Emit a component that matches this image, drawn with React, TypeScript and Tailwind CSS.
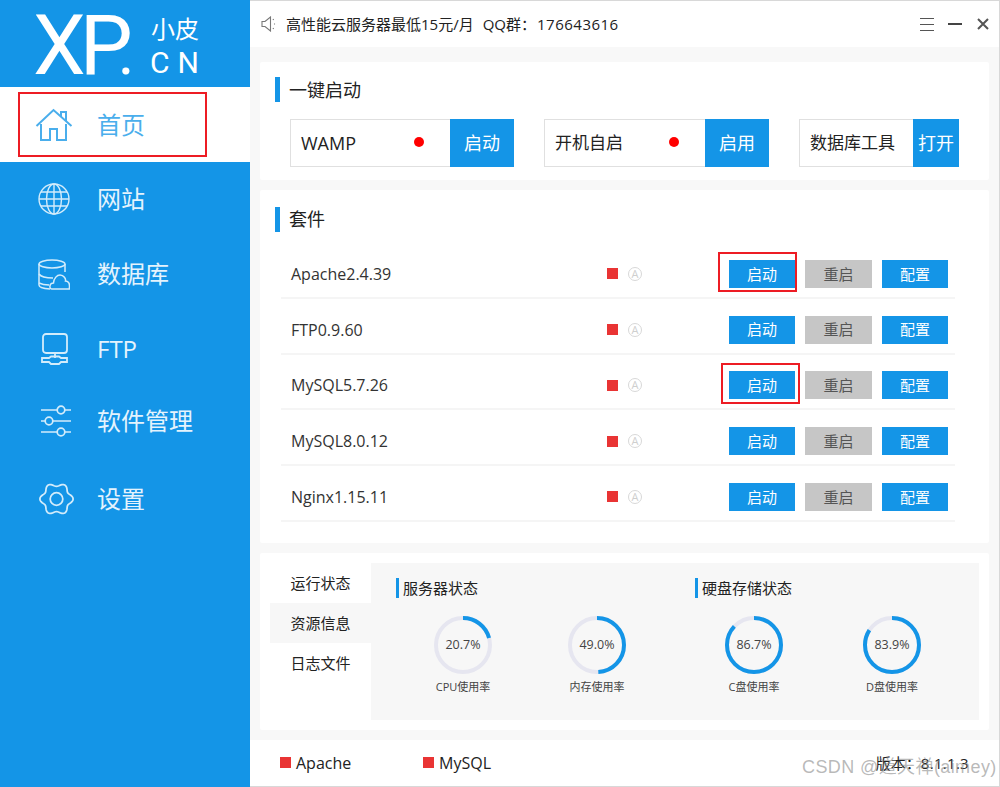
import React from "react";

const BLUE = "#1495e7";

function HomeIcon() {
  return (
    <svg width="38" height="34" viewBox="0 0 38 34" fill="none" stroke="#4aaeec" strokeWidth="2">
      <path d="M1.5 18 L18.5 2 L36.5 18" />
      <path d="M26 9 V4 H31 V13" />
      <path d="M6 16 V32 H15 V21 H22 V32 H31 V16" />
    </svg>
  );
}

function GlobeIcon() {
  return (
    <svg width="32" height="32" viewBox="0 0 32 32" fill="none" stroke="#d3ecfb" strokeWidth="1.4">
      <circle cx="16" cy="16" r="15" />
      <ellipse cx="16" cy="16" rx="7.5" ry="15" />
      <path d="M16 1 V31 M1 16 H31 M3 9 H29 M3 23 H29" />
    </svg>
  );
}

function DatabaseIcon() {
  return (
    <svg width="32" height="31" viewBox="0 0 32 31" fill="none" stroke="#d3ecfb" strokeWidth="1.5">
      <ellipse cx="14" cy="5" rx="13" ry="4" />
      <path d="M1 5 V26 C1 28 4 29.5 12 30 M27 5 V13" />
      <path d="M1 15 C3 18 9 19 15 19 M1 24 C3 25 7 26 11 26" />
      <path d="M14 30 C11 30 11 24 15.5 24 C16 19 19 16 22 16 C26 16 28 20 27.5 22 C31 22 32 25 31.3 30 Z" fill={BLUE} />
    </svg>
  );
}

function FtpIcon() {
  return (
    <svg width="27" height="32" viewBox="0 0 27 32" fill="none" stroke="#d3ecfb" strokeWidth="1.8">
      <rect x="2" y="1" width="24" height="19" rx="3" />
      <path d="M14 20 V25" />
      <path d="M1 25 H8 L10 23.5 H18 L20 25 H26 V29 H20 L18 31 H10 L8 29 H1 Z" />
    </svg>
  );
}

function SlidersIcon() {
  return (
    <svg className="ml-[2px]" width="31" height="32" viewBox="0 0 31 32" fill="none" stroke="#d3ecfb" strokeWidth="1.7">
      <path d="M1 5 H17 M25 5 H31 M1 16 H5 M13 16 H31 M1 27 H17 M25 27 H31" />
      <circle cx="21" cy="5" r="3.8" />
      <circle cx="9" cy="16" r="3.8" />
      <circle cx="21" cy="27" r="3.8" />
    </svg>
  );
}

// six rounded lobes, same outline as the app's settings glyph
function gearPath() {
  const pts: string[] = [];
  for (let i = 0; i < 72; i++) {
    const t = (i / 72) * Math.PI * 2;
    const r = 15.2 + 1.9 * Math.cos(6 * t);
    pts.push(`${(18 + r * Math.cos(t)).toFixed(2)} ${(17 + r * Math.sin(t) * 0.97).toFixed(2)}`);
  }
  return `M${pts.join(" L")} Z`;
}

function GearIcon() {
  return (
    <svg className="ml-[5px]" width="36" height="34" viewBox="0 0 36 34" fill="none" stroke="#d3ecfb" strokeWidth="1.8">
      <path d={gearPath()} />
      <circle cx="18" cy="17" r="6.5" />
    </svg>
  );
}

function SpeakerIcon() {
  return (
    <svg width="16" height="16" viewBox="0 0 16 16" fill="none" stroke="#777" strokeWidth="1.1">
      <path d="M1 5.5 H4 L9.5 1 V15 L4 10.5 H1 Z" />
      <path d="M12 3 L12.6 4 M13.5 7.5 V8.5 M12 13 L12.6 12" />
    </svg>
  );
}

function Ring({ pct, label }: { pct: number; label: string }) {
  const r = 27;
  const len = 2 * Math.PI * r;
  return (
    <div className="w-[100px] flex flex-col items-center">
      <div className="relative w-[58px] h-[58px]">
        <svg width="58" height="58" viewBox="0 0 58 58" fill="none" strokeWidth="4">
          <circle cx="29" cy="29" r={r} stroke="#e6e6f0" />
          <circle
            cx="29"
            cy="29"
            r={r}
            stroke={BLUE}
            strokeDasharray={`${(len * pct) / 100} ${len}`}
            transform="rotate(-90 29 29)"
          />
        </svg>
        <div className="absolute inset-0 flex items-center justify-center text-[12.5px] text-[#444]">{pct.toFixed(1)}%</div>
      </div>
      <div className="mt-[5px] text-[11px] leading-[16px] text-[#444]">{label}</div>
    </div>
  );
}

function SectionTitle({ text, low }: { text: string; low?: boolean }) {
  return (
    <div className="flex items-center h-[25px] pl-[15px]">
      <span className="w-[5px] h-[25px] bg-[#1495e7]" />
      <span className={`ml-[9px] text-[18px] leading-[25px] text-[#222] ${low ? "pt-[2px]" : ""}`}>{text}</span>
    </div>
  );
}

function StartBox({ label, action, boxW, btnW, dot, small }: { label: string; action: string; boxW: string; btnW: string; dot?: boolean; small?: boolean }) {
  return (
    <div className="flex h-[48px]">
      <div className={`${boxW} flex items-center border border-[#e0e0e0] border-r-0 pl-[10px] justify-between whitespace-nowrap text-[#222] ${small ? "text-[17px]" : "text-[18px]"} ${dot ? "pr-[26px]" : ""}`}>
        <span>{label}</span>
        {dot && <span className="w-[10px] h-[10px] rounded-full bg-[#ff0000] -mt-[3px]" />}
      </div>
      <button className={`${btnW} bg-[#1495e7] text-white text-[18px] whitespace-nowrap`}>{action}</button>
    </div>
  );
}

const navItems = [
  { label: "网站", icon: <GlobeIcon /> },
  { label: "数据库", icon: <DatabaseIcon /> },
  { label: "FTP", icon: <FtpIcon /> },
  { label: "软件管理", icon: <SlidersIcon />, shift: true },
  { label: "设置", icon: <GearIcon /> },
];

const suites = ["Apache2.4.39", "FTP0.9.60", "MySQL5.7.26", "MySQL8.0.12", "Nginx1.15.11"];

export default function App() {
  return (
    <div className="relative flex w-[1000px] h-[787px] overflow-hidden bg-[#f8f8f8] font-['Open_Sans','Noto_Sans_CJK_SC',sans-serif]">
      <aside className="w-[250px] shrink-0 bg-[#1495e7] text-[#e4f3fd]">
        <div className="h-[87px] relative text-white overflow-hidden">
          <div className="absolute left-[33px] top-[2px] text-[84px] leading-[87px] font-['Roboto',sans-serif] tracking-[-6px] whitespace-nowrap">
            XP<span className="-ml-[9px] text-[64px]">.</span>
          </div>
          <div className="absolute left-[151px] top-[13px] text-[24px] leading-[32px]">小皮</div>
          <div className="absolute left-[150px] top-[44px] text-[30px] leading-[38px] tracking-[8px] font-['Roboto',sans-serif]">CN</div>
        </div>
        <div className="h-[75px] bg-white flex items-center pl-[34px] text-[#4aaeec]">
          <div className="w-[40px] mr-[23px] flex justify-center"><HomeIcon /></div>
          <span className="text-[24px]">首页</span>
        </div>
        {navItems.map(item => (
          <div key={item.label} className={`h-[75px] flex items-center pl-[34px] ${item.shift ? "pb-[7px]" : "pb-[1px]"}`}>
            <div className="w-[40px] mr-[23px] flex justify-center">{item.icon}</div>
            <span className="text-[24px]">{item.label}</span>
          </div>
        ))}
      </aside>

      <main className="flex-1 flex flex-col border-t border-r border-b border-[#d8d8d8] pr-[10px]">
        <header className="h-[46px] -mr-[10px] bg-white flex items-center pl-[11px] pr-[10px] text-[15px] text-[#222]">
          <SpeakerIcon />
          <span className="ml-[9px]">高性能云服务器最低15元/月</span>
          <span className="ml-[9px]">QQ群：</span>
          <span className="ml-[1px] tracking-[0.5px]">176643616</span>
          <div className="ml-auto flex items-center">
            <svg width="14" height="13" viewBox="0 0 14 13" stroke="#555" strokeWidth="1">
              <path d="M0 .5 H14 M0 6.5 H14 M0 12.5 H14" />
            </svg>
            <div className="ml-[14px] w-[14px] h-[2px] bg-[#444]" />
            <svg className="ml-[15px]" width="12" height="12" viewBox="0 0 12 12" stroke="#555" strokeWidth="2">
              <path d="M1 1 L11 11 M11 1 L1 11" />
            </svg>
          </div>
        </header>

        <section className="mt-[15px] ml-[10px] h-[118px] bg-white rounded-[2px] pt-[15px]">
          <SectionTitle text="一键启动" low />
          <div className="mt-[17px] pl-[30px] flex gap-[30px]">
            <StartBox label="WAMP" action="启动" boxW="w-[160px]" btnW="w-[64px]" dot />
            <StartBox label="开机自启" action="启用" boxW="w-[161px]" btnW="w-[64px]" dot small />
            <StartBox label="数据库工具" action="打开" boxW="w-[114px]" btnW="w-[46px]" small />
          </div>
        </section>

        <section className="mt-[10px] ml-[10px] h-[353px] bg-white rounded-[2px] pt-[17px]">
          <SectionTitle text="套件" />
          <div className="mt-[11px] ml-[21px] mr-[34px]">
            {suites.map(name => (
              <div key={name} className="h-[55.75px] flex items-center border-b-2 border-[#f5f5f5] pt-[8px] pl-[10px] pr-[7px]">
                <span className="w-[316px] text-[16px] text-[#333]">{name}</span>
                <span className="w-[11px] h-[11px] bg-[#e93434]" />
                <span className="ml-[10px] w-[14px] h-[14px] rounded-full border border-[#d8d8d8] text-[#cfcfcf] text-[11px] leading-[12px] text-center">A</span>
                <div className="ml-auto flex text-[15px]">
                  <button className="w-[66px] h-[28px] bg-[#1495e7] text-white">启动</button>
                  <button className="ml-[10px] w-[67px] h-[28px] bg-[#c6c6c6] text-[#555]">重启</button>
                  <button className="ml-[10px] w-[66px] h-[28px] bg-[#1495e7] text-white">配置</button>
                </div>
              </div>
            ))}
          </div>
        </section>

        <section className="mt-[10px] ml-[10px] h-[177px] bg-white rounded-[2px] p-[10px] flex">
          <div className="w-[101px] text-[15px] text-[#222] text-center">
            <div className="h-[40px] flex items-center justify-center">运行状态</div>
            <div className="h-[40px] flex items-center justify-center bg-[#f7f7f7]">资源信息</div>
            <div className="h-[40px] flex items-center justify-center">日志文件</div>
          </div>
          <div className="flex-1 bg-[#f7f7f7] pl-[25px] pt-[15px] flex">
            <div className="w-[299px]">
              <div className="flex items-center h-[20px]">
                <span className="w-[3px] h-[20px] bg-[#1495e7]" />
                <span className="ml-[4px] text-[15px] text-[#222]">服务器状态</span>
              </div>
              <div className="mt-[18px] ml-[17px] flex gap-[34px]">
                <Ring pct={20.7} label="CPU使用率" />
                <Ring pct={49.0} label="内存使用率" />
              </div>
            </div>
            <div>
              <div className="flex items-center h-[20px]">
                <span className="w-[3px] h-[20px] bg-[#1495e7]" />
                <span className="ml-[4px] text-[15px] text-[#222]">硬盘存储状态</span>
              </div>
              <div className="mt-[18px] ml-[9px] flex gap-[38px]">
                <Ring pct={86.7} label="C盘使用率" />
                <Ring pct={83.9} label="D盘使用率" />
              </div>
            </div>
          </div>
        </section>

        <footer className="mt-[10px] -mr-[10px] flex-1 bg-white flex items-center pl-[30px] pr-[30px] text-[16px] text-[#222]">
          <span className="w-[11px] h-[11px] bg-[#e93434] -mt-[2px]" />
          <span className="ml-[5px] w-[127px]">Apache</span>
          <span className="w-[11px] h-[11px] bg-[#e93434] -mt-[2px]" />
          <span className="ml-[5px]">MySQL</span>
          <span className="ml-auto text-[15px]">版本：</span>
          <span className="text-[15px] tracking-[0.3px]">8.1.1.3</span>
        </footer>
      </main>

      {/* annotation boxes + watermark sit over the app */}
      <div className="absolute left-[18px] top-[92px] w-[189px] h-[65px] border-2 border-[#ed1c24]" />
      <div className="absolute left-[718px] top-[252px] w-[79px] h-[40px] border-2 border-[#ed1c24]" />
      <div className="absolute left-[721px] top-[363px] w-[79px] h-[41px] border-2 border-[#ed1c24]" />
      <div className="absolute left-[802px] top-[754px] text-[18px] leading-[26px] tracking-[0.4px] text-[#8a8a8a]/60 whitespace-nowrap font-['Liberation_Sans','Noto_Sans_CJK_SC',sans-serif]">CSDN @道天禅(aimey)</div>
    </div>
  );
}
